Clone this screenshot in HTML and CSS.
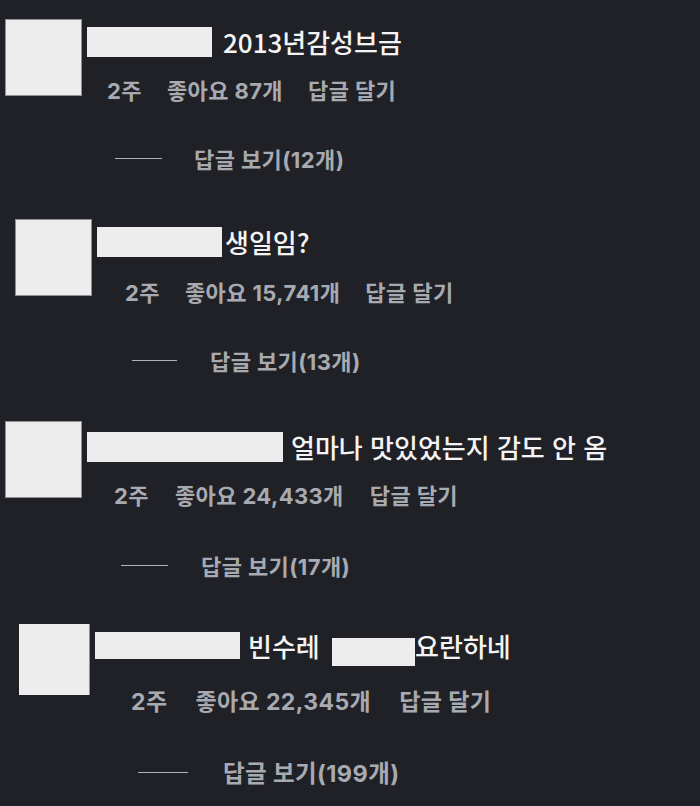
FILE: index.html
```html
<!DOCTYPE html>
<html lang="ko">
<head>
    <meta charset="UTF-8">
    <meta name="viewport" content="width=device-width, initial-scale=1.0">
    <title>댓글</title>
    <link rel="stylesheet" href="styles.css">
</head>
<body>

    <!-- 댓글 1 -->
    <div class="comment c1">
        <div class="avatar"></div>
        <div class="comment-body">
            <div class="comment-line">
                <span class="hidden-box"></span>
                <span class="comment-text">2013년감성브금</span>
            </div>
            <div class="meta">
                <span>2주</span>
                <span>좋아요 87개</span>
                <span>답글 달기</span>
            </div>
            <div class="replies">
                <span class="replies-line"></span>
                <span>답글 보기(12개)</span>
            </div>
        </div>
    </div>

    <!-- 댓글 2 -->
    <div class="comment c2">
        <div class="avatar"></div>
        <div class="comment-body">
            <div class="comment-line">
                <span class="hidden-box"></span>
                <span class="comment-text">생일임?</span>
            </div>
            <div class="meta">
                <span>2주</span>
                <span>좋아요 15,741개</span>
                <span>답글 달기</span>
            </div>
            <div class="replies">
                <span class="replies-line"></span>
                <span>답글 보기(13개)</span>
            </div>
        </div>
    </div>

    <!-- 댓글 3 -->
    <div class="comment c3">
        <div class="avatar"></div>
        <div class="comment-body">
            <div class="comment-line">
                <span class="hidden-box"></span>
                <span class="comment-text">얼마나 맛있었는지 감도 안 옴</span>
            </div>
            <div class="meta">
                <span>2주</span>
                <span>좋아요 24,433개</span>
                <span>답글 달기</span>
            </div>
            <div class="replies">
                <span class="replies-line"></span>
                <span>답글 보기(17개)</span>
            </div>
        </div>
    </div>

    <!-- 댓글 4 -->
    <div class="comment c4">
        <div class="avatar"></div>
        <div class="comment-body">
            <div class="comment-line">
                <span class="hidden-box"></span>
                <span class="comment-text">빈수레 </span>
                <span class="hidden-box small"></span>
                <span class="comment-text">요란하네</span>
            </div>
            <div class="meta">
                <span>2주</span>
                <span>좋아요 22,345개</span>
                <span>답글 달기</span>
            </div>
            <div class="replies">
                <span class="replies-line"></span>
                <span>답글 보기(199개)</span>
            </div>
        </div>
    </div>

</body>
</html>
```

FILE: styles.css
```css
body {
    margin: 0;
    padding-top: 19px;
    background-color: #202126;
    font-family: "Noto Sans CJK KR", "Noto Sans", sans-serif;
    color: #f4f4f4;
}

.comment {
    display: flex;
    align-items: flex-start;
}

.avatar {
    flex: none;
    width: 75px;
    height: 75px;
    background-color: #ededed;
    border: 1px solid #8e9094;
}

.comment-body {
    margin-left: 5px;
}

.comment-line {
    display: flex;
    align-items: center;
    height: 30px;
}

.hidden-box {
    flex: none;
    height: 30px;
    background-color: #ededed;
}

.comment-text {
    font-size: 26px;
    font-weight: 500;
    line-height: 30px;
    white-space: pre;
}

.meta,
.replies {
    display: flex;
    align-items: center;
    height: 30px;
    font-family: Inter, "Noto Sans CJK KR", sans-serif;
    font-size: 22px;
    font-weight: 700;
    letter-spacing: 0.4px;
    color: #a8aab1;
}

.meta {
    gap: 25px;
}

.replies-line {
    width: 47px;
    height: 1px;
    background-color: #b0b2b8;
    margin-right: 32px;
}

/* 댓글별 위치 */
.c1 { padding-left: 5px; }
.c1 .comment-body { margin-top: 8px; }
.c1 .hidden-box { width: 125px; margin-right: 11px; }
.c1 .meta { margin-top: 17px; padding-left: 20px; }
.c1 .replies { margin-top: 39px; padding-left: 28px; }

.c2 { padding-left: 15px; margin-top: 46px; }
.c2 .comment-body { margin-top: 8px; }
.c2 .hidden-box { width: 125px; margin-right: 3px; }
.c2 .meta { margin-top: 19px; padding-left: 28px; }
.c2 .replies { margin-top: 39px; padding-left: 35px; }
.c2 .replies-line { width: 45px; margin-right: 33px; }

.c3 { padding-left: 5px; margin-top: 46px; }
.c3 .comment-body { margin-top: 11px; }
.c3 .hidden-box { width: 196px; margin-right: 8px; }
.c3 .meta { margin-top: 17px; padding-left: 27px; gap: 26px; }
.c3 .replies { margin-top: 41px; padding-left: 34px; }
.c3 .replies-line { width: 47px; margin-right: 33px; }

.c4 { padding-left: 19px; margin-top: 44px; }
.c4 .avatar { width: 70px; height: 71px; border: none; border-right: 1px solid #8e9094; }
.c4 .comment-body { margin-top: 8px; }
.c4 .comment-line { height: 27px; align-items: flex-start; }
.c4 .hidden-box { width: 145px; height: 27px; margin-right: 8px; }
.c4 .hidden-box.small { width: 83px; height: 28px; margin: 6px 0 0 5px; }
.c4 .comment-text { line-height: 27px; }
.c4 .meta { margin-top: 26px; padding-left: 36px; font-size: 23px; gap: 28px; }
.c4 .replies { margin-top: 42px; padding-left: 43px; font-size: 23.5px; }
.c4 .replies-line { width: 50px; margin-right: 35px; }
```
